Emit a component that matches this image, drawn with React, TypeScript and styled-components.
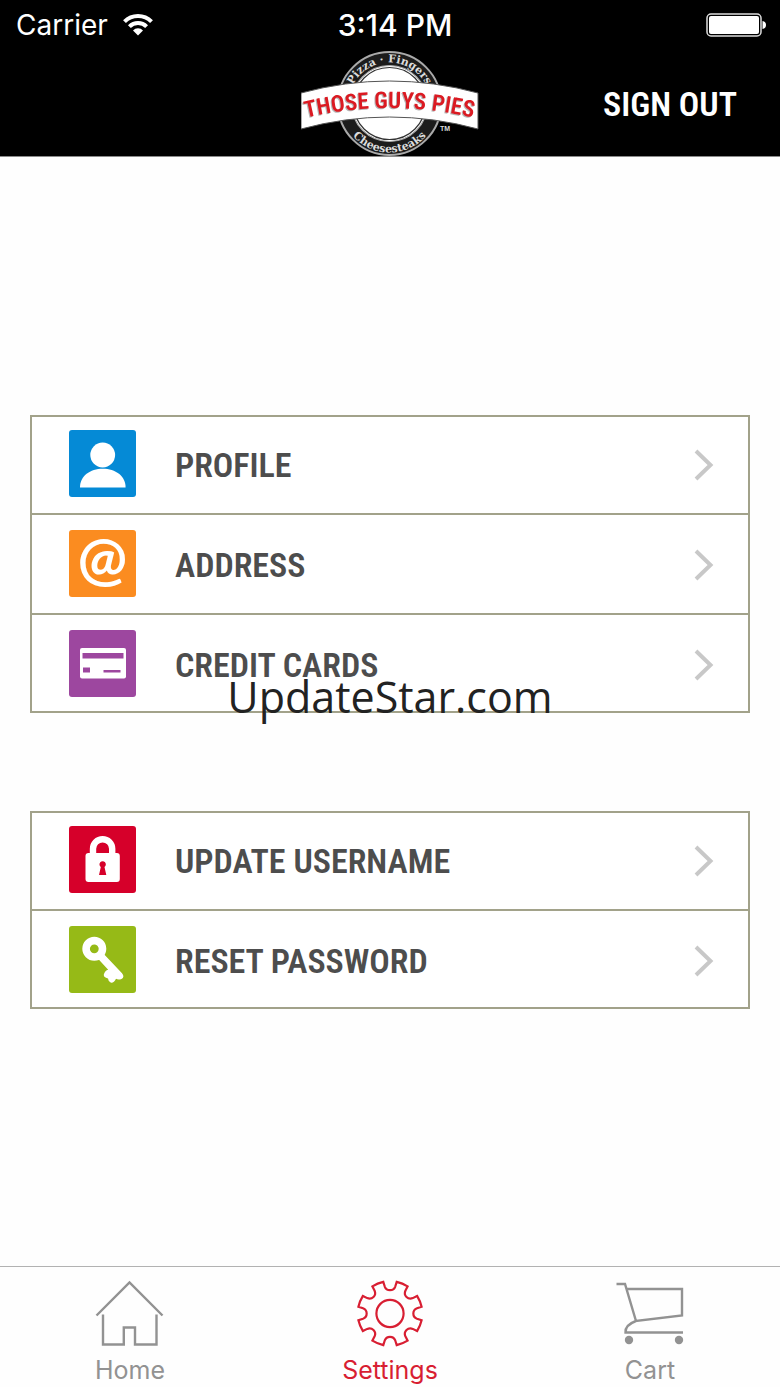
import React from "react";
import styled, { createGlobalStyle } from "styled-components";

const condensed = `"Roboto Condensed", "Liberation Sans Narrow", Roboto, sans-serif`;
const system = `Inter, Roboto, sans-serif`;

const GlobalStyle = createGlobalStyle`
  *, *::before, *::after { box-sizing: border-box; }
  body { margin: 0; background: #fefefe; font-family: ${system}; }
`;

const Screen = styled.div`
  position: relative;
  display: flex;
  flex-direction: column;
  min-height: 100vh;
`;

const Header = styled.header`
  background: #000;
  color: #fff;
  border-bottom: 1px solid #8a8a8a;
`;

const StatusBar = styled.div`
  display: grid;
  grid-template-columns: 1fr auto 1fr;
  align-items: center;
  height: 50px;
  padding: 0 14px 0 16px;
  font-size: 28px;
  line-height: 36px;
`;

const Carrier = styled.div`
  display: flex;
  align-items: center;
  gap: 15px;
`;

const Clock = styled.time`
  padding-left: 8px;
  font-size: 30px;
  font-weight: 500;
`;

const Battery = styled.svg`
  justify-self: end;
`;

const NavBar = styled.div`
  display: grid;
  grid-template-columns: 1fr auto 1fr;
  align-items: center;
  padding: 0 43px;
`;

const Logo = styled.svg`
  grid-column: 2;
  display: block;
`;

const BannerText = styled.text`
  fill: #db1a22;
  font-family: ${condensed};
  font-size: 23px;
  font-weight: 600;
  text-anchor: middle;
  filter: drop-shadow(-1px 1px 0 #b5b5b5);
`;

const RingText = styled.text`
  fill: #ddd;
  font-family: "DejaVu Serif", serif;
  font-size: 11px;
  font-weight: 700;
  text-anchor: middle;
`;

const SignOut = styled.button`
  justify-self: end;
  padding: 2px 0 0;
  border: 0;
  background: none;
  color: #fff;
  font: 600 34px/40px ${condensed};
  cursor: pointer;
`;

const Main = styled.main`
  flex: 1;
  display: flex;
  flex-direction: column;
  justify-content: center;
  gap: 98px;
  padding: 30px;
`;

const Menu = styled.ul`
  margin: 0;
  padding: 0;
  list-style: none;
  border: 2px solid #a2a28a;
  background: #fff;
`;

/* Every row is 100px tall; the outer rows tuck under the frame's border. */
const MenuItem = styled.li`
  height: 100px;
  border-bottom: 2px solid #a2a28a;
  &:first-child { margin-top: -2px; }
  &:last-child { margin-bottom: -2px; height: 98px; border-bottom: 0; }
`;

const MenuLink = styled.a`
  display: flex;
  align-items: center;
  gap: 39px;
  height: 98px;
  padding: 0 34px 0 37px;
  color: #4d4d4d;
  font: 600 34px/40px ${condensed};
  text-decoration: none;
`;

const MenuLabel = styled.span`
  flex: 1;
  padding-top: 3px;
`;

const Tile = styled.svg`
  flex: none;
  border-radius: 3px;
`;

const TabBar = styled.nav`
  display: grid;
  grid-template-columns: repeat(3, 1fr);
  height: 121px;
  border-top: 1px solid #b2b2b2;
`;

const Tab = styled.a<{ $active?: boolean }>`
  display: flex;
  flex-direction: column;
  align-items: center;
  padding-top: 12px;
  gap: 4px;
  color: ${(p) => (p.$active ? "#d81e32" : "#929292")};
  font-size: 25px;
  line-height: 34px;
  text-decoration: none;
`;

const Watermark = styled.div`
  position: absolute;
  top: 50%;
  left: 50%;
  transform: translate(-50%, -50%);
  padding-top: 6px;
  color: #222;
  font: 400 43px/60px "Open Sans", "Noto Sans", sans-serif;
  pointer-events: none;
`;

const glyphs = {
  profile: (
    <g fill="#fff">
      <circle cx="33.7" cy="25" r="12.4" />
      <path d="M11 57.5C11 46 21 38.8 33.8 38.8S56.6 46 56.6 57.5Z" />
    </g>
  ),
  address: (
    <text x="33.5" y="50" textAnchor="middle" fill="#fff" fontFamily="Lato" fontWeight="700" fontSize="59">@</text>
  ),
  card: (
    <>
      <rect x="11" y="18" width="46" height="30.5" rx="2" fill="#fff" />
      <path d="M13.5 23H54.5V28.5H13.5ZM14 37.5H21V42.5H14ZM34.5 40H51.5V42.5H34.5Z" fill="#9d479f" />
    </>
  ),
  lock: (
    <>
      <path d="M24 29V22.8a9.6 9.6 0 0 1 19.2 0V29" fill="none" stroke="#fff" strokeWidth="6.4" />
      <rect x="16.5" y="27" width="34.3" height="29" rx="3" fill="#fff" />
      <path d="M31.8 41a3.2 3.2 0 1 1 3.7 0L37.3 49H30Z" fill="#d6002a" />
    </>
  ),
  key: (
    <>
      <circle cx="25.3" cy="22.8" r="8.2" fill="none" stroke="#fff" strokeWidth="7.6" />
      <path d="M29.5 33.2 34.8 28 53 47.2Q56 51 52.5 53Q49 54.2 47 52.7Q45 57 42 56.7Q39 55 39 52.4Q34.5 51.6 34.8 48.5Q36 44.5 39.2 43.7Z" fill="#fff" />
    </>
  ),
};

type Entry = { label: string; color: string; glyph: keyof typeof glyphs };

const account: Entry[] = [
  { label: "PROFILE", color: "#058ad6", glyph: "profile" },
  { label: "ADDRESS", color: "#fb8c20", glyph: "address" },
  { label: "CREDIT CARDS", color: "#9d479f", glyph: "card" },
];

const security: Entry[] = [
  { label: "UPDATE USERNAME", color: "#d6002a", glyph: "lock" },
  { label: "RESET PASSWORD", color: "#96ba17", glyph: "key" },
];

function MenuGroup({ entries }: { entries: Entry[] }) {
  return (
    <Menu>
      {entries.map((e) => (
        <MenuItem key={e.label}>
          <MenuLink href="#">
            <Tile width="67" height="67" viewBox="0 0 67 67" aria-hidden="true">
              <rect width="67" height="67" fill={e.color} />
              {glyphs[e.glyph]}
            </Tile>
            <MenuLabel>{e.label}</MenuLabel>
            <svg width="20" height="34" viewBox="0 0 20 34" fill="none" stroke="#c8c8c8" strokeWidth="4" aria-hidden="true">
              <path d="M2 4 16.5 18 2 32" />
            </svg>
          </MenuLink>
        </MenuItem>
      ))}
    </Menu>
  );
}

// Outline of an eight-toothed gear: flat-topped teeth joined by round notches.
function gearPath(cx: number, cy: number) {
  const at = (r: number, deg: number) => {
    const a = (deg * Math.PI) / 180;
    return `${(cx + r * Math.cos(a)).toFixed(2)} ${(cy + r * Math.sin(a)).toFixed(2)}`;
  };
  let d = `M${at(32.3, -12)}`;
  for (let i = 0; i < 8; i++) {
    const n = i * 45;
    d += `L${at(27.5, n - 11)}A5.6 5.6 0 0 0 ${at(27.5, n + 11)}L${at(32.3, n + 12)}A36 36 0 0 1 ${at(32.3, n + 33)}`;
  }
  return d + "Z";
}

function BrandLogo() {
  return (
    <Logo width="178" height="106" viewBox="0 0 178 106" role="img" aria-label="Those Guys Pies">
      <defs>
        <path id="ring-top" d="M47.5 53.5A41 41 0 0 1 129.5 53.5" />
        <path id="ring-bottom" d="M39.5 53.5A49 49 0 0 0 137.5 53.5" />
        <path id="banner-line" d="M0 69Q88.5 47 177 69" />
      </defs>
      <circle cx="88.5" cy="53.5" r="51.5" fill="#1c1c1c" stroke="#aaa" strokeWidth="2" />
      <circle cx="88.5" cy="53.5" r="38" fill="#fff" stroke="#aaa" strokeWidth="1.2" />
      <circle cx="88.5" cy="53.5" r="36" fill="none" stroke="#333" strokeWidth="1.2" />
      <RingText><textPath href="#ring-top" startOffset="50%">Pizza · Fingers</textPath></RingText>
      <RingText><textPath href="#ring-bottom" startOffset="50%">Cheesesteaks</textPath></RingText>
      <path d="M0 43Q88.5 19 177 43V79Q88.5 55 0 79Z" fill="#fff" stroke="#555" strokeWidth="1" />
      <BannerText><textPath href="#banner-line" startOffset="50%">THOSE GUYS PIES</textPath></BannerText>
      <text x="139" y="81" fill="#ddd" fontFamily="Liberation Sans" fontWeight="700" fontSize="7">TM</text>
    </Logo>
  );
}

export default function App() {
  return (
    <Screen>
      <GlobalStyle />
      <Header>
        <StatusBar>
          <Carrier>
            <span>Carrier</span>
            <svg width="30" height="24" viewBox="0 0 30 24" fill="none" stroke="#fff" strokeWidth="4" aria-label="Wi-Fi">
              <path d="M1.5 8.7a19 19 0 0 1 27 0" />
              <path d="M6.4 13.6a12.2 12.2 0 0 1 17.2 0" />
              <path d="M15 22.5 10 17.4a7 7 0 0 1 10 0Z" fill="#fff" stroke="none" />
            </svg>
          </Carrier>
          <Clock>3:14 PM</Clock>
          <Battery width="60" height="24" viewBox="0 0 60 24" aria-label="Battery full">
            <rect x="1" y="1" width="54" height="22" rx="4" fill="none" stroke="#ddd" strokeWidth="1.5" />
            <rect x="3" y="3" width="50" height="18" rx="2" fill="#fff" />
            <path d="M56.5 8Q60 8.5 60 12T56.5 16Z" fill="#fff" />
          </Battery>
        </StatusBar>
        <NavBar>
          <BrandLogo />
          <SignOut type="button">SIGN OUT</SignOut>
        </NavBar>
      </Header>

      <Main>
        <MenuGroup entries={account} />
        <MenuGroup entries={security} />
      </Main>

      <TabBar>
        <Tab href="#">
          <svg width="70" height="70" viewBox="0 0 70 70" fill="none" stroke="currentColor" strokeWidth="2.4" aria-hidden="true">
            <path d="M1.5 36.5 34.5 3.5 67.5 36.5M8 35.5V65.5H28.8V48.5H40V65.5H61.5V35.5" />
          </svg>
          Home
        </Tab>
        <Tab href="#" $active aria-current="page">
          <svg width="70" height="70" viewBox="0 0 70 70" fill="none" stroke="currentColor" strokeWidth="2.2" aria-hidden="true">
            <path d={gearPath(35, 34.5)} />
            <circle cx="35" cy="34.5" r="13.6" />
          </svg>
          Settings
        </Tab>
        <Tab href="#">
          <svg width="70" height="70" viewBox="0 0 70 70" fill="none" stroke="currentColor" strokeWidth="2.4" aria-hidden="true">
            <path d="M1.5 5H10L21 42 67 36.5V10H12M21 42Q10 46 10.5 53.5H68" />
            <circle cx="14" cy="61" r="4.2" fill="currentColor" stroke="none" />
            <circle cx="64" cy="61" r="4.2" fill="currentColor" stroke="none" />
          </svg>
          Cart
        </Tab>
      </TabBar>

      <Watermark>UpdateStar.com</Watermark>
    </Screen>
  );
}
